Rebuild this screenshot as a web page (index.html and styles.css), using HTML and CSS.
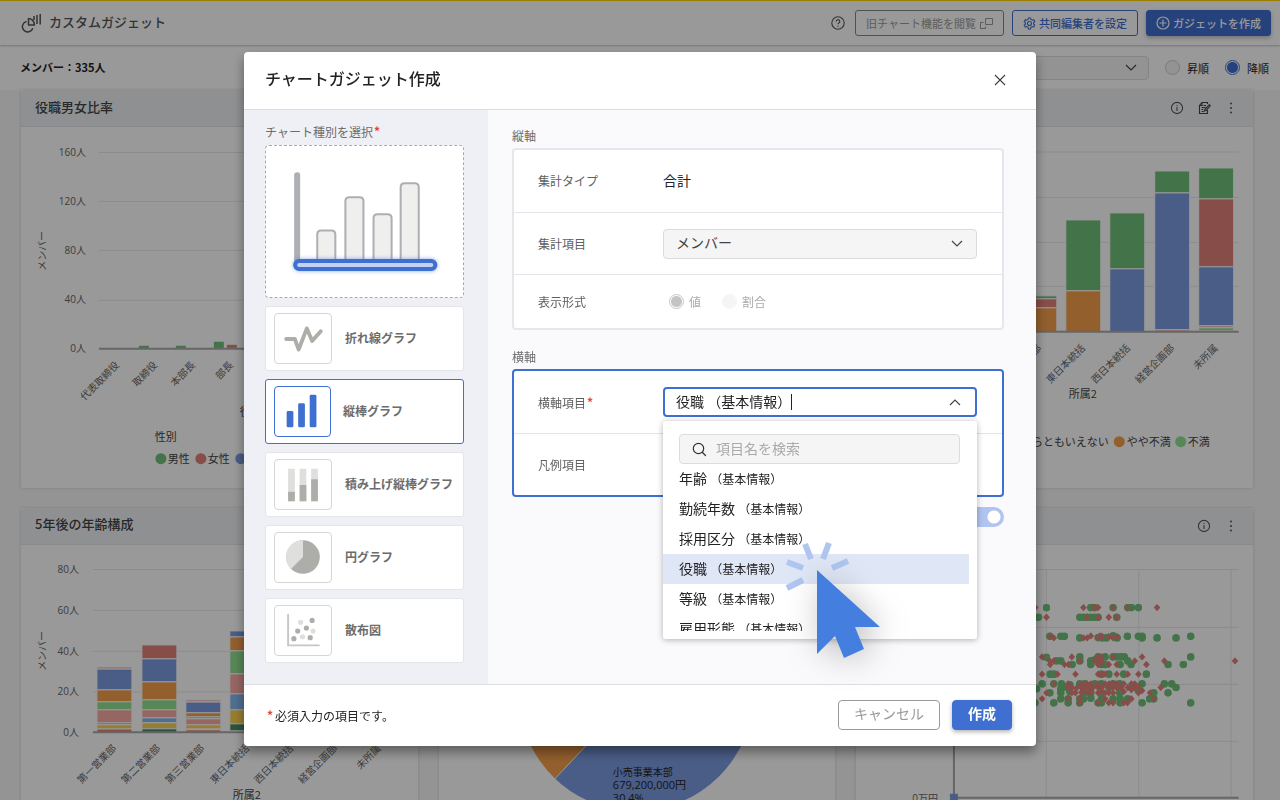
FILE: index.html
```html
<!DOCTYPE html>
<html lang="ja">
<head>
<meta charset="utf-8">
<meta name="viewport" content="width=device-width, initial-scale=1">
<title>カスタムガジェット</title>
<link rel="stylesheet" href="styles.css">
</head>
<body>
<div class="page">
  <header class="topbar">
    <svg class="logo" width="21" height="21" viewBox="0 0 21 21" fill="none" stroke="#555" stroke-width="1.500"><path d="M5.500 8.500A5.300 5.300 0 1 0 11.800 15.200"/><path d="M7.500 5.500q5.500.5 6 6.500h-6z" stroke-linejoin="round"/><path d="M13 3v4M16 2v9M19.200 1v10.500" stroke-width="1.500"/></svg>
    <h1 class="topbar-title">カスタムガジェット</h1>
    <div class="topbar-actions">
      <svg class="help" width="14" height="14" viewBox="0 0 14 14" fill="none" stroke="#555" stroke-width="1.100"><circle cx="7" cy="7" r="6.200"/><path d="M5.200 5.600a1.800 1.800 0 1 1 2.600 1.500c-.6.3-.8.6-.8 1.200M7 9.700v1"/></svg>
      <button class="btn btn-plain" type="button">旧チャート機能を閲覧<svg width="13" height="13" viewBox="0 0 13 13" fill="none" stroke="currentColor"><path d="M5.500 1.500h7v6h-7zM3.500 5.500h-3v6h5v-2"/></svg></button>
      <button class="btn btn-outline" type="button"><svg width="13" height="13" viewBox="0 0 13 13" fill="none" stroke="currentColor" stroke-width="1.100"><path d="M5.400 1h2.200l.3 1.500 1.300.7 1.500-.5 1.100 1.900-1.200 1v1.600l1.200 1-1.100 1.900-1.500-.5-1.300.7L7.600 12H5.400l-.3-1.700-1.300-.7-1.500.5-1.100-1.900 1.200-1V5.600l-1.200-1 1.100-1.900 1.500.5 1.300-.7z"/><circle cx="6.500" cy="6.500" r="2"/></svg>共同編集者を設定</button>
      <button class="btn btn-primary" type="button"><svg width="14" height="14" viewBox="0 0 14 14" fill="none" stroke="currentColor" stroke-width="1.200"><circle cx="7" cy="7" r="6"/><path d="M7 3.500v7M3.500 7h7"/></svg>ガジェットを作成</button>
    </div>
  </header>

  <div class="filterbar">
    <p class="member-count">メンバー：335人</p>
    <div class="sorting">
      <div class="select-wrap sort-select">
        <select class="select" aria-label="並び替え"><option></option></select>
        <svg class="chevron" width="12" height="8" viewBox="0 0 12 8"><path d="M1 1l5 5 5-5"/></svg>
      </div>
      <label class="sort-option"><input class="radio" type="radio" name="order">昇順</label>
      <label class="sort-option"><input class="radio" type="radio" name="order" checked>降順</label>
    </div>
  </div>

  <main class="board">
    <section class="card">
      <header class="card-head"><h2>役職男女比率</h2></header>
      <svg class="chart" viewBox="21 127 397 361">
        <path class="grid" d="M99 152.500h302M99 201.500h302M99 250.500h302M99 300.500h302"/>
        <g class="axis-text end"><text x="86" y="156">160人</text><text x="86" y="205">120人</text><text x="86" y="254">80人</text><text x="86" y="303">40人</text><text x="86" y="352">0人</text></g>
        <text class="axis-text mid" transform="translate(46 251) rotate(-90)">メンバー</text>
        <path class="c-green" d="M139 346h10v3h-10zM176 346h10v3h-10zM214 342h10v7h-10z"/>
        <path class="c-red" d="M227 345h10v4h-10z"/>
        <path class="base" d="M99 349h302"/>
        <g class="axis-text end"><text transform="translate(120 366) rotate(-45)">代表取締役</text><text transform="translate(158 366) rotate(-45)">取締役</text><text transform="translate(196 366) rotate(-45)">本部長</text><text transform="translate(234 366) rotate(-45)">部長</text></g>
        <g class="legend"><text x="240" y="416">役職</text><text x="155" y="441">性別</text><text x="168" y="463">男性</text><text x="208" y="463">女性</text></g>
        <circle class="c-green" cx="161" cy="459" r="5.500"/><circle class="c-red" cx="201" cy="459" r="5.500"/><circle class="c-blue" cx="241" cy="459" r="5.500"/>
      </svg>
    </section>

    <section class="card"><header class="card-head"></header><svg class="chart" viewBox="0 0 397 361"></svg></section>

    <section class="card">
      <header class="card-head">
        <div class="card-tools">
          <svg width="14" height="14" viewBox="0 0 14 14" fill="none" stroke="#555" stroke-width="1.100"><circle cx="7" cy="7" r="5.600"/><path d="M7 6v4M7 4v1"/></svg>
          <svg width="14" height="14" viewBox="0 0 14 14" fill="none" stroke="#444" stroke-width="1.100"><path d="M10.500 9v3.500h-8v-8L5 1.500h5.500V3M5 1.500v3H2.500M6.500 4.500H9M4.500 6.500h4M4.500 8.500h2M4.500 10.500h2M12.300 3.500L8 8.300l-.5 1.700 1.700-.6 4.100-4.700z"/></svg>
          <svg width="14" height="14" viewBox="0 0 14 14" fill="#555"><circle cx="7" cy="2.500" r="1"/><circle cx="7" cy="7" r="1"/><circle cx="7" cy="11.500" r="1"/></svg>
        </div>
      </header>
      <svg class="chart" viewBox="856 127 397 361">
        <path class="grid" d="M940 152h299M940 197.500h299M940 242.500h299M940 286.500h299"/>
        <g class="bars">
          <path class="c-green" d="M1022 296h35v3h-35zM1066 220h35v71h-35zM1110 213h35v56h-35zM1155 171h35v22h-35zM1199 168h35v31h-35z"/>
          <path class="c-red" d="M1022 299h35v9h-35zM1199 199h35v68h-35z"/>
          <path class="c-orange" d="M1022 308h35v24h-35zM1066 291h35v41h-35z"/>
          <path class="c-blue" d="M1110 269h35v63h-35zM1155 193h35v137h-35zM1199 267h35v59h-35z"/>
          <path class="c-pink" d="M1155 330h35v2h-35zM1199 326h35v2h-35z"/>
          <path class="c-lime" d="M1199 328h35v3h-35z"/>
        </g>
        <path class="base" d="M940 332h299"/>
        <g class="axis-text end"><text transform="translate(1042 349) rotate(-45)">第三営業部</text><text transform="translate(1086 349) rotate(-45)">東日本統括</text><text transform="translate(1131 349) rotate(-45)">西日本統括</text><text transform="translate(1175 349) rotate(-45)">経営企画部</text><text transform="translate(1219 349) rotate(-45)">未所属</text></g>
        <g class="legend"><text x="1069" y="398">所属2</text><text class="end" x="1109" y="446">どちらともいえない</text><text x="1127" y="446">やや不満</text><text x="1188" y="446">不満</text></g>
        <circle class="c-orange" cx="1119.500" cy="442" r="5.500"/><circle class="c-lime" cx="1181" cy="442" r="5.500"/>
      </svg>
    </section>

    <section class="card">
      <header class="card-head"><h2>5年後の年齢構成</h2></header>
      <svg class="chart" viewBox="21 545 397 361">
        <path class="grid" d="M93 569.500h308M93 610.500h308M93 651.500h308M93 692h308"/>
        <g class="axis-text end"><text x="79" y="573">80人</text><text x="79" y="614">60人</text><text x="79" y="655">40人</text><text x="79" y="695">20人</text><text x="79" y="736">0人</text></g>
        <text class="axis-text mid" transform="translate(46 651) rotate(-90)">メンバー</text>
        <g class="bars">
          <path class="c-red" d="M97 729h35v4H97zM142 645h35v14h-35zM186 730h35v3h-35z"/>
          <path class="c-blue" d="M97 669h35v21H97zM142 659h35v23h-35zM186 702h35v11h-35zM230 631h35v6h-35z"/>
          <path class="c-orange" d="M97 690h35v12H97zM142 682h35v18h-35zM186 713h35v4h-35zM230 637h35v14h-35z"/>
          <path class="c-lime" d="M97 702h35v8H97zM142 700h35v10h-35zM186 717h35v2h-35zM230 651h35v23h-35z"/>
          <path class="c-pink" d="M97 667h35v2H97zM97 710h35v13H97zM142 710h35v8h-35zM186 700h35v2h-35zM186 719h35v6h-35zM230 674h35v20h-35z"/>
          <path class="c-sky" d="M97 723h35v2H97zM142 718h35v5h-35zM230 694h35v16h-35z"/>
          <path class="c-yellow" d="M97 725h35v4H97zM142 723h35v6h-35zM186 725h35v4h-35zM230 710h35v14h-35z"/>
          <path class="c-forest" d="M142 729h35v4h-35zM230 724h35v7h-35z"/>
        </g>
        <path class="base" d="M93 732.500h308"/>
        <g class="axis-text end"><text transform="translate(117 749) rotate(-45)">第一営業部</text><text transform="translate(161 749) rotate(-45)">第二営業部</text><text transform="translate(205 749) rotate(-45)">第三営業部</text><text transform="translate(250 749) rotate(-45)">東日本統括</text><text transform="translate(294 749) rotate(-45)">西日本統括</text><text transform="translate(338 749) rotate(-45)">経営企画部</text><text transform="translate(382 749) rotate(-45)">未所属</text></g>
        <g class="legend"><text x="233" y="799">所属2</text></g>
      </svg>
    </section>

    <section class="card">
      <header class="card-head"></header>
      <svg class="chart" viewBox="438 545 397 361">
        <circle class="c-blue" cx="635" cy="693" r="118"/>
        <path class="c-orange" d="M635 693L554 779A118 118 0 0 1 517 693z" stroke="#fff"/>
        <g class="pie-label"><text x="612" y="776">小売事業本部</text><text class="pie-value" x="612" y="789">679,200,000円</text><text class="pie-value" x="612" y="802">30.4%</text></g>
      </svg>
    </section>

    <section class="card">
      <header class="card-head">
        <div class="card-tools">
          <svg width="14" height="14" viewBox="0 0 14 14" fill="none" stroke="#555" stroke-width="1.100"><circle cx="7" cy="7" r="5.600"/><path d="M7 6v4M7 4v1"/></svg>
          <svg width="14" height="14" viewBox="0 0 14 14" fill="#555"><circle cx="7" cy="2.500" r="1"/><circle cx="7" cy="7" r="1"/><circle cx="7" cy="11.500" r="1"/></svg>
        </div>
      </header>
      <svg class="chart" viewBox="856 545 397 361">
        <defs>
          <marker id="dot" markerUnits="userSpaceOnUse" markerWidth="24" markerHeight="24" refX="12" refY="12"><circle class="c-green" cx="12" cy="12" r="11.500"/></marker>
          <marker id="gem" markerUnits="userSpaceOnUse" markerWidth="24" markerHeight="24" refX="12" refY="12"><path class="c-red" d="M12 1l10 11-10 11L2 12z"/></marker>
        </defs>
        <path class="grid" d="M954 569.500h285M954 627.500h285M954 684.500h285M954 741.500h285M1046.500 569v229M1139 569v229M1231.500 569v229"/>
        <g transform="translate(1030 500) scale(.3333)">
          <polyline class="dots" points="50,323 183,323 195,323 250,323 294,323 305,323 326,323 26,352 150,352 161,352 172,352 184,352 195,352 205,352 261,352 60,409 93,409 104,409 150,414 205,413 218,414 230,414 250,408 262,414 293,409 326,409 337,409 337,414 382,414 439,414 483,409 50,472 150,471 205,471 226,471 250,471 262,471 273,471 284,471 483,471 80,483 93,483 150,483 183,483 195,480 294,483 127,494 183,494 215,494 226,494 271,494 304,494 415,494 461,494 61,523 72,523 215,523 237,523 282,523 350,523 37,552 72,552 95,552 120,555 150,552 165,552 195,552 215,552 250,552 270,552 337,552 404,552 426,552 20,567 93,567 110,562 180,563 238,563 270,563 305,563 439,563 60,579 93,579 120,575 160,579 183,579 215,579 270,579 326,572 372,579 415,579 93,597 115,597 150,597 161,597 183,595 215,597 250,597 271,597 294,597 360,597 372,597 15,609 72,609 115,609 150,609 205,609 215,609 271,609 337,609 483,609"/>
          <polyline class="gems" points="16,323 161,323 194,323 205,323 250,323 293,323 382,323 50,352 172,352 205,352 237,352 261,352 61,409 72,414 161,414 172,414 183,408 205,414 210,408 216,409 237,410 250,414 262,410 37,471 126,471 205,471 215,471 250,471 337,471 60,483 72,483 150,483 194,483 205,483 215,483 315,483 404,483 616,483 61,494 104,494 116,494 205,494 216,490 237,494 261,494 350,494 37,523 83,523 137,523 205,523 216,523 226,523 261,523 294,523 326,523 72,552 115,552 150,556 161,552 172,552 183,552 205,552 226,552 238,552 250,552 261,552 282,552 305,552 315,552 115,563 126,563 139,566 155,563 165,563 177,563 190,563 205,563 216,563 237,563 250,563 261,563 273,563 294,563 315,563 326,560 393,563 50,579 126,579 137,579 155,577 172,579 183,579 205,579 216,577 226,579 237,579 250,579 282,575 305,570 326,579 337,572 361,579 37,597 115,597 150,597 226,597 305,597 372,597 150,609 205,609 237,609 250,609 282,609 293,609"/>
        </g>
        <path class="base" d="M954 569v229h285"/>
        <path class="c-blue" d="M950 794h8v8h-8z"/>
        <text class="axis-text end" x="938" y="802">0万円</text>
      </svg>
    </section>
  </main>
</div>

<div class="overlay">
  <section class="modal" role="dialog" aria-modal="true" aria-labelledby="modal-title">
    <header class="modal-head">
      <h2 id="modal-title">チャートガジェット作成</h2>
      <button class="close" type="button" aria-label="閉じる"><svg width="12" height="12" viewBox="0 0 12 12"><path d="M1 1l10 10M11 1L1 11"/></svg></button>
    </header>

    <div class="modal-body">
      <aside class="types">
        <h3 class="caption">チャート種別を選択<span class="required">*</span></h3>
        <div class="preview">
          <svg viewBox="266 146 196 150">
            <path d="M297 175v85" stroke="#adafb4" stroke-width="6" stroke-linecap="round"/>
            <g fill="#efefee" stroke="#adafb4" stroke-width="2"><path d="M317 262v-28q0-4 4-4h10q4 0 4 4v28z"/><path d="M345 262v-61q0-4 4-4h10q4 0 4 4v61z"/><path d="M373 262v-44q0-4 4-4h10q4 0 4 4v44z"/><path d="M400 262v-75q0-4 4-4h10q4 0 4 4v75z"/></g>
            <rect class="glow" x="295" y="260.500" width="139.500" height="8" rx="4" fill="#c3d2f2" stroke="#3f6fd0" stroke-width="4"/>
          </svg>
        </div>
        <button class="type" type="button"><svg class="type-icon" viewBox="0 0 57 51"><path d="M11 26h9l4 11 8.500-22 5.500 13 9-10" fill="none" stroke="#adaea9" stroke-width="4" stroke-linecap="round" stroke-linejoin="round"/></svg>折れ線グラフ</button>
        <button class="type selected" type="button" aria-pressed="true"><svg class="type-icon" viewBox="0 0 57 51" fill="#3f6fd0"><rect x="12" y="25" width="7" height="17" rx="1.500"/><rect x="24" y="17" width="7" height="25" rx="1.500"/><rect x="36" y="8" width="7" height="34" rx="1.500"/></svg>縦棒グラフ</button>
        <button class="type" type="button"><svg class="type-icon" viewBox="0 0 57 51"><path d="M13 9h7v34h-7zM25 9h7v34h-7zM37 9h7v34h-7z" fill="#dfe0de"/><path d="M13 33h7v10h-7zM25 26h7v17h-7zM37 20h7v23h-7z" fill="#adaea9"/></svg>積み上げ縦棒グラフ</button>
        <button class="type" type="button"><svg class="type-icon" viewBox="0 0 57 51"><circle cx="28.500" cy="25" r="17.500" fill="#adaea9"/><path d="M28.500 25V7.500A17.500 17.500 0 0 0 16 37.500z" fill="#dfe0de"/></svg>円グラフ</button>
        <button class="type" type="button"><svg class="type-icon" viewBox="0 0 57 51"><path d="M13 9v32h32" fill="none" stroke="#c6c6c6" stroke-width="2" stroke-linecap="round"/><g fill="#adaea9"><circle cx="19" cy="34" r="2.700"/><circle cx="23" cy="26" r="2.700"/><circle cx="32" cy="23" r="2.700"/><circle cx="38" cy="15" r="2.700"/><circle cx="36" cy="33" r="2.700"/></g><g fill="#dfe0de"><circle cx="26" cy="17" r="2.700"/><circle cx="39" cy="26" r="2.700"/><circle cx="28" cy="32" r="2.700"/></g></svg>散布図</button>
      </aside>

      <div class="settings">
        <h3 class="caption">縦軸</h3>
        <div class="panel">
          <div class="row"><span class="row-label">集計タイプ</span><span class="value">合計</span></div>
          <div class="row">
            <label class="row-label" for="metric">集計項目</label>
            <div class="select-wrap">
              <select class="select" id="metric"><option>メンバー</option></select>
              <svg class="chevron" width="12" height="8" viewBox="0 0 12 8"><path d="M1 1l5 5 5-5"/></svg>
            </div>
          </div>
          <div class="row row-short">
            <span class="row-label">表示形式</span>
            <div class="radios">
              <label><input class="radio" type="radio" name="format" checked disabled>値</label>
              <label><input class="radio" type="radio" name="format" disabled>割合</label>
            </div>
          </div>
        </div>

        <h3 class="caption">横軸</h3>
        <div class="panel panel-active">
          <div class="row">
            <label class="row-label" for="axis">横軸項目<span class="required">*</span></label>
            <div class="combo">
              <div class="combo-box">
                <input class="combo-input" id="axis" type="text" role="combobox" aria-expanded="true" aria-controls="axis-list" value="役職 （基本情報）"><span class="caret"></span>
                <svg class="chevron" width="12" height="8" viewBox="0 0 12 8"><path d="M1 7l5-5 5 5"/></svg>
              </div>
              <div class="dropdown">
                <div class="search">
                  <svg width="15" height="15" viewBox="0 0 15 15" fill="none" stroke="#333" stroke-width="1.200" stroke-linecap="round"><circle cx="6.500" cy="6.500" r="5.200"/><path d="M10.500 10.500l3 3"/></svg>
                  <input type="search" placeholder="項目名を検索" aria-label="項目名を検索">
                </div>
                <ul class="options" id="axis-list" role="listbox">
                  <li role="option">年齢 <small>（基本情報）</small></li>
                  <li role="option">勤続年数 <small>（基本情報）</small></li>
                  <li role="option">採用区分 <small>（基本情報）</small></li>
                  <li role="option" class="active" aria-selected="true">役職 <small>（基本情報）</small></li>
                  <li role="option">等級 <small>（基本情報）</small></li>
                  <li role="option">雇用形態 <small>（基本情報）</small></li>
                </ul>
                <svg class="pointer" width="100" height="124" viewBox="784 540 100 124">
                  <path d="M805 544l6 15M829 543l-6 16M787 562l16 6M832 568l16-7M787 588l16-8" fill="none" stroke="#b0c6f0" stroke-width="6"/>
                  <path class="arrow" d="M817 570l63 57h-25l9 22-20 9-9-22-18 18z"/>
                </svg>
              </div>
            </div>
          </div>
          <div class="row"><span class="row-label">凡例項目</span></div>
        </div>
        <input class="switch" type="checkbox" role="switch" aria-label="表示" checked>
      </div>
    </div>

    <footer class="modal-foot">
      <p class="note"><span class="required">*</span>必須入力の項目です。</p>
      <button class="action" type="button">キャンセル</button>
      <button class="action action-primary" type="button">作成</button>
    </footer>
  </section>
</div>
</body>
</html>
```

FILE: styles.css
```css
:root {
  --blue: #3f6fd0;
  --line: #e4e5e9;
  --text: #222;
  --muted: #6c6c6c;
}

* { box-sizing: border-box; }

body {
  margin: 0;
  height: 100vh;
  overflow: hidden;
  background: #f7f7f8;
  color: var(--text);
  font-family: "Noto Sans CJK JP", sans-serif;
  font-size: 12px;
  line-height: 20px;
}

h1, h2, h3, p, ul { margin: 0; padding: 0; }
button, input, select { font: inherit; color: inherit; }
button { cursor: pointer; }
svg { flex: none; }

/* page chrome */
.page { height: 100vh; overflow: hidden; }
.topbar {
  display: flex;
  align-items: center;
  height: 45px;
  padding: 0 9px 0 21px;
  background: #fff;
  border-top: 1px solid #ffd000;
  box-shadow: 0 1px 2px rgba(0, 0, 0, .25);
  position: relative;
}
.topbar-title { margin-left: 7px; padding-bottom: 3px; font-size: 13px; font-weight: 500; color: #555; }
.topbar-actions { display: flex; align-items: center; gap: 8px; margin-left: auto; }
.help { margin-right: 2px; }
.btn {
  display: flex;
  align-items: center;
  gap: 4px;
  height: 26px;
  padding: 0 10px;
  border: 1px solid #888;
  border-radius: 3px;
  background: #fff;
  font-size: 11px;
  white-space: nowrap;
}
.btn-plain { color: #999; }
.btn-outline { gap: 3px; border-color: var(--blue); color: var(--blue); font-weight: 500; }
.btn-primary {
  gap: 3px;
  padding: 0 9px;
  border-color: var(--blue);
  background: var(--blue);
  color: #fff;
  font-weight: 500;
  box-shadow: 0 2px 4px rgba(0, 0, 0, .25);
}

.filterbar {
  display: flex;
  align-items: center;
  justify-content: space-between;
  height: 45px;
  padding: 0 11px 0 20px;
  background: #fff;
}
.member-count { padding-bottom: 2px; font-size: 11px; font-weight: 700; }
.sorting { display: flex; align-items: center; gap: 16px; font-size: 11px; }
.sorting .select-wrap { width: 314px; }
.sort-option { display: flex; align-items: center; gap: 7px; }
.sort-select .select { height: 24px; }

/* gadget board */
.board {
  display: grid;
  grid-template-columns: repeat(3, 1fr);
  gap: 20px 21px;
  padding: 0 27px 21px 21px;
}
.card { background: #fff; box-shadow: 0 0 3px rgba(0, 0, 0, .16); }
.card-head {
  display: flex;
  align-items: center;
  height: 37px;
  padding: 0 15px 0 14px;
  background: #eff1f4;
  border-bottom: 1px solid #e2e4e9;
  border-radius: 4px 4px 0 0;
}
.card-head h2 { padding-bottom: 3px; font-size: 13px; font-weight: 500; color: #444; }
.card-tools { display: flex; gap: 13px; margin-left: auto; }
.chart { display: block; width: 100%; overflow: hidden; }
.grid { fill: none; stroke: #e9e9e9; }
.base { fill: none; stroke: #aaa; stroke-width: 2; }
.axis-text { font-family: "Open Sans", "Noto Sans CJK JP", sans-serif; font-size: 10px; fill: #666; }
.legend { font-size: 11px; fill: #444; }
.pie-label { font-family: "Open Sans", "Noto Sans CJK JP", sans-serif; font-size: 10px; fill: #222; }
.pie-value { font-size: 11px; }
.end { text-anchor: end; }
.mid { text-anchor: middle; }
.bars path { stroke: #fff; stroke-width: 1; }
.c-green { fill: #70c17a; }
.c-red { fill: #e2817a; }
.c-blue { fill: #7b9be0; }
.c-orange { fill: #f39f4c; }
.c-lime { fill: #91e091; }
.c-pink { fill: #fbaaa6; }
.c-sky { fill: #86b8f0; }
.c-yellow { fill: #fad153; }
.c-forest { fill: #4b8a68; }
.dots { fill: none; marker: url(#dot); }
.gems { fill: none; marker: url(#gem); }

/* form controls */
.select-wrap { display: grid; align-items: center; flex: 1; }
.select-wrap > * { grid-area: 1 / 1; }
.select {
  width: 100%;
  height: 30px;
  padding: 0 12px 3px;
  border: 1px solid #dcdcde;
  border-radius: 4px;
  background: #f5f5f5;
  font-size: 14px;
  color: #444;
  appearance: none;
}
.chevron {
  justify-self: end;
  margin-right: 14px;
  fill: none;
  stroke: #444;
  stroke-width: 1.2;
  pointer-events: none;
}
.sort-select .chevron { margin-right: 12px; }
.radio {
  appearance: none;
  width: 15px;
  height: 15px;
  margin: 0;
  border: 1px solid #ccc;
  border-radius: 50%;
  background: #f5f5f5;
}
.radio:checked { border-color: var(--blue); background: radial-gradient(circle, var(--blue) 5px, #fff 6px); }
.radio:disabled { border-color: #f5f5f5; }
.radio:disabled:checked { border-color: #c4c4c4; background: radial-gradient(circle, #c4c4c4 5px, #fff 6px); }

/* dialog */
.overlay {
  position: fixed;
  inset: 0;
  display: flex;
  align-items: center;
  justify-content: center;
  padding-bottom: 2px;
  background: rgba(0, 0, 0, .4);
}
.modal {
  width: 792px;
  max-width: 96%;
  border-radius: 4px;
  background: #fff;
  box-shadow: 0 6px 12px rgba(0, 0, 0, .4);
}
.modal-head {
  display: flex;
  align-items: center;
  justify-content: space-between;
  height: 58px;
  padding: 0 30px 2px 21px;
  border-bottom: 1px solid #dcdde1;
}
.modal-head h2 { padding-bottom: 3px; font-size: 16px; font-weight: 500; }
.close { display: flex; padding: 0; border: 0; background: none; }
.close path { stroke: #444; stroke-width: 1.2; }
.modal-body { display: flex; border-bottom: 1px solid #dcdde1; }
.caption { font-size: 12px; font-weight: 400; line-height: 20px; color: var(--muted); }
.required { margin-left: 1px; color: #e5432d; font-weight: 700; vertical-align: 1px; }

.types {
  display: flex;
  flex-direction: column;
  gap: 8px;
  flex: 0 0 244px;
  padding: 11px 24px 21px 21px;
  background: #eff0f5;
}
.types .caption { margin-bottom: -5px; }
.preview { border: 1px dashed #aaa; border-radius: 4px; background: #fff; }
.preview svg { display: block; }
.glow { filter: drop-shadow(0 0 2px rgba(63, 111, 208, .6)); }
.type {
  display: flex;
  align-items: center;
  gap: 13px;
  height: 65px;
  padding: 0 8px;
  border: 1px solid var(--line);
  border-radius: 3px;
  background: #fff;
  color: var(--muted);
  font-weight: 700;
  white-space: nowrap;
}
.type-icon { width: 58px; height: 51px; border: 1px solid #d6d6d6; border-radius: 4px; }
.selected { gap: 12px; border-color: var(--blue); }
.selected .type-icon { width: 57px; border-color: var(--blue); }

.settings { flex: 1; min-width: 0; padding: 16px 32px 16px 24px; background: #fafafc; }
.settings .caption { height: 22px; }
.panel {
  margin-bottom: 17px;
  border: 2px solid #e6e7eb;
  border-radius: 4px;
  background: #fff;
}
.panel-active { margin-bottom: 10px; border-color: var(--blue); }
.row { display: flex; align-items: center; height: 62px; padding: 0 25px 0 24px; }
.row + .row { border-top: 1px solid var(--line); }
.row-short { height: 54px; }
.row-label { flex: 0 0 125px; color: #606060; }
.value { padding-bottom: 2px; font-size: 14px; }
.radios { display: flex; gap: 21px; margin-left: 6px; color: #aaa; }
.radios label { display: flex; align-items: center; gap: 5px; }

.combo { position: relative; flex: 1; }
.combo-box {
  display: flex;
  align-items: center;
  height: 30px;
  border: 2px solid var(--blue);
  border-radius: 4px;
  background: #fff;
}
.combo-box .chevron { margin: 0 14px 0 auto; }
.combo-input {
  width: 126px;
  padding: 0 0 2px 11px;
  border: 0;
  outline: 0;
  background: none;
  font-size: 14px;
}
.caret { width: 1px; height: 16px; background: #222; }
.dropdown {
  position: absolute;
  top: 34px;
  left: 0;
  right: 0;
  z-index: 2;
  padding: 13px 0 8px;
  border-radius: 3px;
  background: #fff;
  box-shadow: 0 1px 6px rgba(0, 0, 0, .3);
}
.search {
  display: flex;
  align-items: center;
  gap: 9px;
  height: 30px;
  margin: 0 17px 0 16px;
  padding: 0 12px;
  border: 1px solid #dcdcde;
  border-radius: 4px;
  background: #f5f5f5;
}
.search input { flex: 1; min-width: 0; padding: 0 0 2px; border: 0; outline: 0; background: none; font-size: 14px; }
.search input::placeholder { color: #aaa; }
.options { height: 167px; margin-right: 8px; overflow: hidden; list-style: none; }
.options li { height: 30px; padding-left: 16px; font-size: 14px; line-height: 28px; white-space: nowrap; }
.options small { font-size: 12px; }
.options .active { background: #dfe6f6; }
.pointer { position: absolute; top: 119px; left: 121px; overflow: visible; pointer-events: none; }
.arrow { fill: #447fe0; filter: drop-shadow(4px 4px 16px rgba(0, 0, 0, .25)); }

.switch {
  display: block;
  appearance: none;
  width: 38px;
  height: 20px;
  margin: 0 0 0 auto;
  border-radius: 10px;
  background: radial-gradient(circle at 28px 10px, #fff 6px, #b0c4ef 7px);
}

.modal-foot {
  display: flex;
  align-items: center;
  gap: 12px;
  height: 61px;
  padding: 0 24px 0 22px;
}
.note { margin-right: auto; }
.note .required { margin-right: 2px; }
.action {
  height: 30px;
  padding: 0 15px 4px;
  border: 1px solid #999;
  border-radius: 4px;
  background: #fff;
  color: #999;
  font-size: 14px;
  line-height: 20px;
}
.action-primary {
  border-color: var(--blue);
  background: var(--blue);
  color: #fff;
  font-weight: 700;
  box-shadow: 0 2px 4px rgba(0, 0, 0, .3);
}
```
